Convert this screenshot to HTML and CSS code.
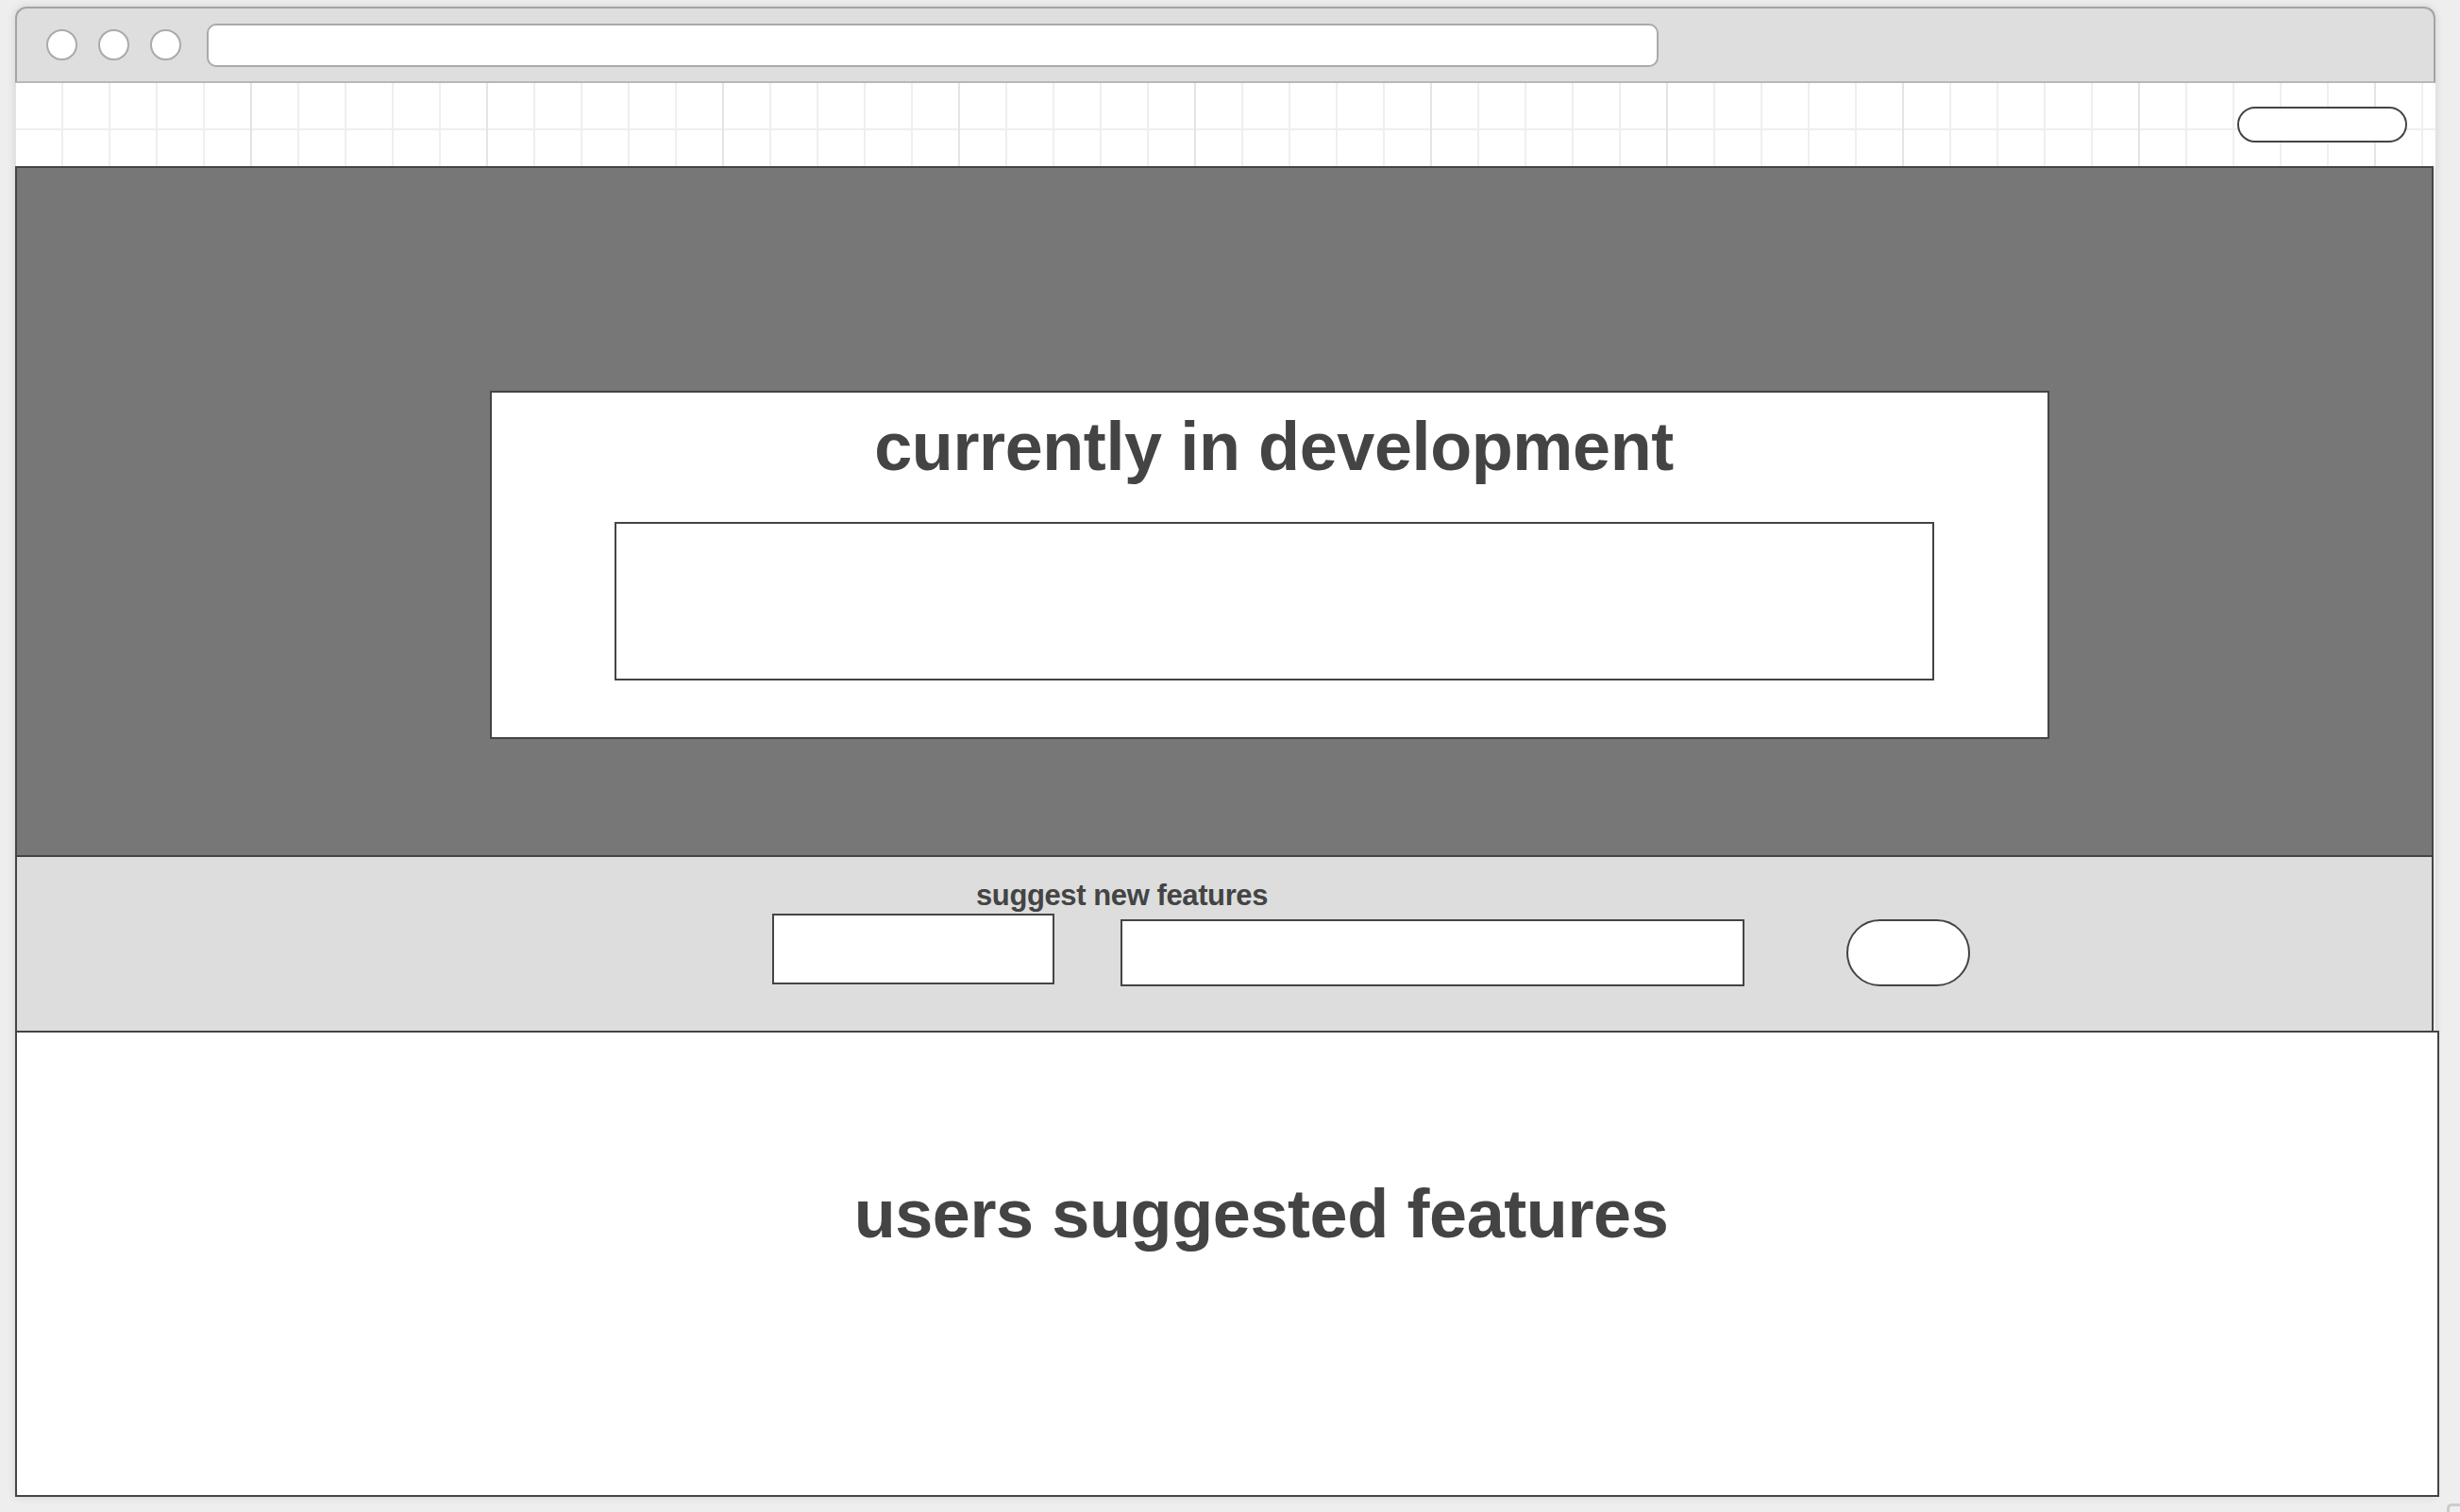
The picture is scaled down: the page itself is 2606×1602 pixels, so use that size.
FILE: index.html
```html
<!DOCTYPE html>
<html lang="en">
<head>
<meta charset="utf-8">
<title>Features</title>
<link rel="stylesheet" href="styles.css">
</head>
<body>
<div class="window">
  <div class="titlebar">
    <div class="dots">
      <span class="dot"></span><span class="dot"></span><span class="dot"></span>
    </div>
    <div class="urlbar"></div>
  </div>
  <header class="topbar">
    <div class="pill"></div>
  </header>
  <section class="hero">
    <div class="dev-card">
      <h1 class="heading heading-dev">currently in development</h1>
      <div class="dev-field"></div>
    </div>
  </section>
  <section class="suggest">
    <div class="suggest-label">suggest new features</div>
    <div class="suggest-row">
      <div class="field field-short"></div>
      <div class="field field-long"></div>
      <div class="field round-btn"></div>
    </div>
  </section>
  <section class="users">
    <h2 class="heading heading-users">users suggested features</h2>
  </section>
</div>
<div class="resize-handle"></div>
</body>
</html>
```

FILE: styles.css
```css
html, body {
  margin: 0;
  padding: 0;
}

body {
  background: #eeeeee;
  font-family: "Liberation Sans", Arial, Helvetica, sans-serif;
  color: #444444;
  height: 1602px;
  overflow: hidden;
  position: relative;
}

.window {
  margin: 7px 0 0 16px;
  width: 2564px;
  border-radius: 12px 12px 0 0;
  box-shadow: 0 0 10px rgba(0, 0, 0, 0.12);
}

.titlebar {
  box-sizing: border-box;
  height: 81px;
  background: #dedede;
  border: 2px solid #a4a4a4;
  border-bottom-color: #b8b8b8;
  border-radius: 12px 12px 0 0;
  display: flex;
  align-items: center;
  padding-left: 31px;
}

.dots {
  display: flex;
  gap: 22px;
}

.dot {
  display: block;
  box-sizing: border-box;
  width: 33px;
  height: 33px;
  border-radius: 50%;
  background: #ffffff;
  border: 2px solid #aaaaaa;
}

.urlbar {
  box-sizing: border-box;
  margin-left: 27px;
  width: 1538px;
  height: 46px;
  background: #ffffff;
  border: 2px solid #aaaaaa;
  border-radius: 10px;
}

.topbar {
  box-sizing: border-box;
  height: 88px;
  display: flex;
  align-items: center;
  justify-content: flex-end;
  padding-right: 30px;
  background-color: #ffffff;
  background-image:
    linear-gradient(90deg, #e4e4e4 2px, transparent 2px),
    linear-gradient(90deg, #efefef 2px, transparent 2px),
    linear-gradient(180deg, #efefef 2px, transparent 2px);
  background-size: 250px 100%, 50px 100%, 100% 50px;
  background-position: -1px 0, -1px 0, 0 -2px;
}

.pill {
  box-sizing: border-box;
  width: 180px;
  height: 38px;
  border: 2px solid #444444;
  border-radius: 19px;
  background: #ffffff;
}

.hero {
  box-sizing: border-box;
  width: 2562px;
  height: 732px;
  background: #777777;
  border: 2px solid #444444;
  padding: 236px 0 0 501px;
}

.dev-card {
  box-sizing: border-box;
  width: 1652px;
  height: 369px;
  background: #ffffff;
  border: 2px solid #444444;
  padding-top: 21px;
}

.heading {
  margin: 0;
  font-size: 72px;
  line-height: 72px;
  font-weight: 700;
  letter-spacing: -0.4px;
  text-align: center;
  color: #444444;
}

.heading-dev {
  padding-left: 9px;
}

.heading-users {
  padding-left: 72px;
}

.dev-field {
  box-sizing: border-box;
  width: 1398px;
  height: 168px;
  margin: 44px 0 0 130px;
  border: 2px solid #444444;
  background: #ffffff;
}

.suggest {
  box-sizing: border-box;
  width: 2562px;
  height: 184px;
  background: #dddddd;
  border-left: 2px solid #444444;
  border-right: 2px solid #444444;
  padding: 25px 0 0 800px;
}

.suggest-label {
  margin-left: 216px;
  font-size: 31px;
  line-height: 31px;
  font-weight: 700;
  letter-spacing: -0.4px;
}

.suggest-row {
  display: flex;
  align-items: flex-start;
  margin-top: 4px;
}

.field {
  box-sizing: border-box;
  background: #ffffff;
  border: 2px solid #444444;
  flex: none;
}

.field-short {
  width: 299px;
  height: 75px;
}

.field-long {
  width: 661px;
  height: 71px;
  margin: 6px 0 0 70px;
}

.round-btn {
  width: 131px;
  height: 71px;
  margin: 6px 0 0 108px;
  border-radius: 36px;
}

.users {
  box-sizing: border-box;
  width: 2568px;
  height: 494px;
  background: #ffffff;
  border: 2px solid #444444;
  padding-top: 156px;
}

.resize-handle {
  position: absolute;
  left: 2592px;
  top: 1593px;
  width: 14px;
  height: 14px;
  box-sizing: border-box;
  border-top: 3px solid #cccccc;
  border-left: 3px solid #cccccc;
  border-top-left-radius: 5px;
}
```
